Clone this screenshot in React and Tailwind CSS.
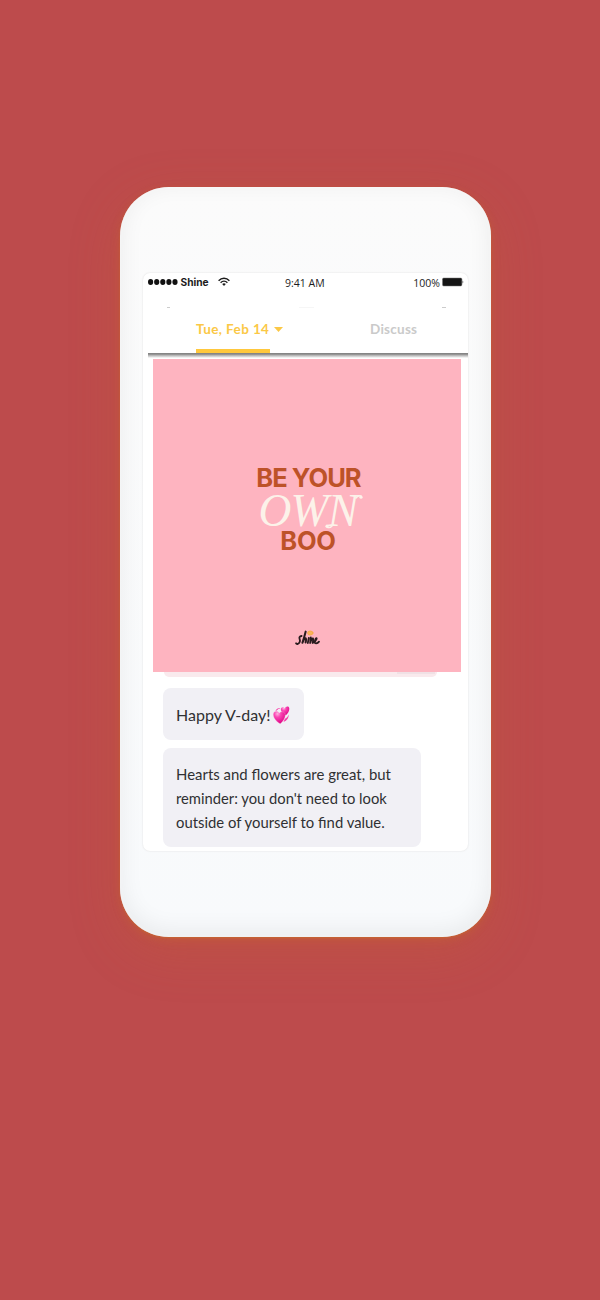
function Wifi() {
  return (
    <svg className="-mt-px ml-[9px] h-[10px] w-[12px]" viewBox="0 0 12 10" fill="none" stroke="#1c1c1c" strokeLinecap="butt">
      <path d="M.6 3.7C3.7.5 8.3.5 11.4 3.7" strokeWidth="1.4" />
      <path d="M2.6 5.7C4.6 3.6 7.4 3.6 9.4 5.7" strokeWidth="1.3" />
      <path d="M4.2 7.1Q6 5.5 7.8 7.1L6 9Z" fill="#1c1c1c" stroke="none" />
    </svg>
  );
}

function Battery() {
  return (
    <svg className="-mt-px ml-[2px] h-[10px] w-[22px]" viewBox="0 0 22 10">
      <rect x=".5" y="1" width="19.4" height="8" rx="1.2" fill="#151515" stroke="#777" strokeWidth=".5" />
      <path d="M20.6 3.3Q22 5 20.6 6.7Z" fill="#151515" />
    </svg>
  );
}

function StatusBar() {
  return (
    <div className="flex h-[19px] items-center pl-[5px] pr-[4px] text-[#1c1c1c]">
      <div className="flex w-[137px] items-center">
        <svg className="-mt-px h-[6px] w-[30px]" viewBox="0 0 30 6" fill="#111">
          <ellipse cx="2.6" cy="3" rx="2.6" ry="2.9" />
          <ellipse cx="8.7" cy="3" rx="2.6" ry="2.9" />
          <ellipse cx="14.8" cy="3" rx="2.6" ry="2.9" />
          <ellipse cx="20.9" cy="3" rx="2.6" ry="2.9" />
          <ellipse cx="27" cy="3" rx="2.6" ry="2.9" />
        </svg>
        <span className="-mt-px ml-[2.5px] w-[28.5px] whitespace-nowrap font-['Inter'] text-[10.2px] font-bold leading-none">Shine</span>
        <Wifi />
      </div>
      <span className="mt-px whitespace-nowrap font-['Open_Sans'] text-[10.5px] leading-none">9:41 AM</span>
      <div className="ml-auto flex items-center">
        <span className="mt-px font-['Open_Sans'] text-[10.5px] leading-none">100%</span>
        <Battery />
      </div>
    </div>
  );
}

function Tabs() {
  return (
    <div>
      <div className="ml-[5px] flex h-[62px] items-end">
        <div className="ml-[48px] flex h-[37px] w-[92px] flex-col justify-between">
          <div className="flex items-center gap-[5px] text-[#fbc846]">
            <span className="w-[73px] whitespace-nowrap font-['Lato'] text-[13.5px] font-bold leading-[26px] tracking-[0.4px]">Tue, Feb 14</span>
            <svg className="h-[5px] w-[9px] shrink-0" viewBox="0 0 9 5"><path d="M0 0H9L4.5 5Z" fill="currentColor" /></svg>
          </div>
          <div className="h-[4px] w-[74px] bg-[#ffc83d]" />
        </div>
        <div className="ml-[82px] h-[37px] whitespace-nowrap font-['Lato'] text-[13.5px] font-bold leading-[26px] tracking-[0.25px] text-[#cacaca]">Discuss</div>
      </div>
      <div className="ml-[5px] h-[5px] bg-linear-to-b from-[#858585] from-20% via-[#b8b8b8] via-50% to-white" />
    </div>
  );
}

function ShineMark() {
  return (
    <svg className="mt-[73px] h-[20px] w-[26px]" viewBox="0 0 26 20" fill="none" stroke="#291b1e" strokeLinecap="round" strokeLinejoin="round">
      <ellipse cx="16.3" cy="4" rx="2.7" ry="2" fill="#f7b45c" stroke="#f6a83b" strokeWidth=".8" />
      <path d="M7.6 7Q4.6 7.5 5.6 9.9Q6.8 13.3 4 14.8Q2.4 15.4 2 14.3" strokeWidth="1.8" />
      <path d="M11.7 2.6Q10.4 8 8.4 13.8Q10.6 8.8 11.7 9.2Q12.5 9.8 11.6 13.6" strokeWidth="2" />
      <path d="M14.8 9L13.8 14M16.8 8.5L16.1 14Q18 9 19 9.4Q19.6 10 18.6 14Q22 12 22.6 9.9Q22.8 8.2 21.5 10Q19.6 14.5 22.1 14.4Q23.8 14.2 25 12.6" strokeWidth="1.8" />
    </svg>
  );
}

function Poster() {
  return (
    <div className="ml-[10px] flex h-[313px] w-[308px] flex-col items-center bg-[#feb4c0] pt-[104px]">
      <div className="whitespace-nowrap pl-[3px] font-['Inter'] text-[25.5px] font-bold leading-[30px] tracking-[-0.95px] text-[#bd5228]">BE YOUR</div>
      <div className="relative flex h-[33px] w-[103px] items-center whitespace-nowrap pl-[3px] pt-[2px] font-['Liberation_Serif'] text-[45.5px] italic leading-[33px] tracking-[-0.8px] text-[#fcf2e9]">
        <span>OWN</span>
        <svg className="absolute left-0 top-0 h-[36px] w-[108px]" viewBox="0 0 108 36" fill="none" stroke="#fcf2e9" strokeWidth="1.5" strokeLinecap="round">
          <path d="M100 5C101.5 3 103 2.5 105 3" />
          <circle cx="105" cy="4.2" r="1.6" fill="#fcf2e9" stroke="none" />
          <path d="M77 32C75 34.5 73 35 71 34" />
          <circle cx="71" cy="33.2" r="1.6" fill="#fcf2e9" stroke="none" />
        </svg>
      </div>
      <div className="whitespace-nowrap pl-[2px] font-['Inter'] text-[25.5px] font-bold leading-[30px] tracking-[-0.3px] text-[#bd5228]">BOO</div>
      <ShineMark />
    </div>
  );
}

function Hearts() {
  return (
    <svg className="mt-px ml-[2px] h-[18px] w-[17px]" viewBox="0 0 17 18">
      <defs>
        <radialGradient id="heart" cx=".35" cy=".2" r=".8">
          <stop offset="0" stopColor="#ffb2e1" />
          <stop offset=".35" stopColor="#fa45b3" />
          <stop offset="1" stopColor="#df0585" />
        </radialGradient>
      </defs>
      <path d="M12.8 9.2C9.5 7.2 7.2 5 8 2.5C8.8.8 10.9 1.1 11.7 2.6C12.5.3 15.6-.2 16.2 2C16.7 4.8 14.8 7.5 12.8 9.2Z" fill="url(#heart)" />
      <path d="M7.2 17.7C3.7 16 .3 12 .3 8.5C.4 5.1 4.3 4.2 6.4 7C8.2 4.8 12 5.7 12.3 8.7C12.5 12 9.8 15.9 7.2 17.7Z" fill="url(#heart)" stroke="#fbd9ef" strokeWidth=".3" />
      <path d="M2.3 4.7Q4.5 1.2 7.5 2.2Q5 2.4 3.8 4.4M10.5 16Q15.9 14 15.7 8.6Q14.7 12.1 11.8 13.1" fill="#f53eaa" />
    </svg>
  );
}

function Line({ children, className }) {
  return <p className={`w-fit origin-left whitespace-nowrap ${className}`}>{children}</p>;
}

function Chat() {
  return (
    <div className="ml-[20px] font-['Lato'] text-[16px] leading-[24px] text-[#303033]">
      <div className="ml-px flex h-[5px] w-[273px] justify-end overflow-hidden rounded-b-[5px] bg-[#f9eaed] pr-[2px]">
        <div className="h-[2px] w-[38px] bg-[#f0e1e5]" />
      </div>
      <div className="mt-[11px] flex h-[52px] w-[141px] items-center rounded-[8px] bg-[#f1f0f5] pl-[13px] pt-[1px]">
        <Line className="">Happy V-day!</Line>
        <Hearts />
      </div>
      <div className="mt-[8px] h-[99px] w-[258px] rounded-[8px] bg-[#f1f0f5] pl-[13px] pt-[14px]">
        <Line className="scale-x-[.934]">Hearts and flowers are great, but</Line>
        <Line className="scale-x-[.922]">reminder: you don't need to look</Line>
        <Line className="scale-x-[.928]">outside of yourself to find value.</Line>
      </div>
    </div>
  );
}

export default function App() {
  return (
    <main className="flex h-[1300px] w-[600px] items-start bg-[#bd4b4c] pl-[120px] pt-[187px]">
      <div className="h-[750px] w-[370.5px] rounded-[49px] bg-linear-to-b from-[#fbfbfb] to-[#f8fafc] pl-[23px] pt-[86px] shadow-[0_1px_2px_rgba(201,112,40,.6),0_3px_10px_rgba(201,112,40,.3),0_14px_50px_rgba(201,105,47,.25),inset_0_-5px_25px_rgba(0,0,0,.07),inset_0_0_5px_rgba(255,255,255,1)]">
        <div className="h-[578px] w-[325px] overflow-hidden rounded-[7px] bg-white shadow-[0_0_2px_#ddd]">
          <StatusBar />
          <div className="flex justify-between pl-[24px] pr-[22px] pt-[15px]">
            <div className="h-px w-[3px] bg-[#ccc]" />
            <div className="h-px w-[15px] bg-[#f6f6f6]" />
            <div className="h-px w-[4px] bg-[#ccc]" />
          </div>
          <div className="-mt-[17px]"><Tabs /></div>
          <div className="pt-[1px]"><Poster /></div>
          <Chat />
        </div>
      </div>
    </main>
  );
}
